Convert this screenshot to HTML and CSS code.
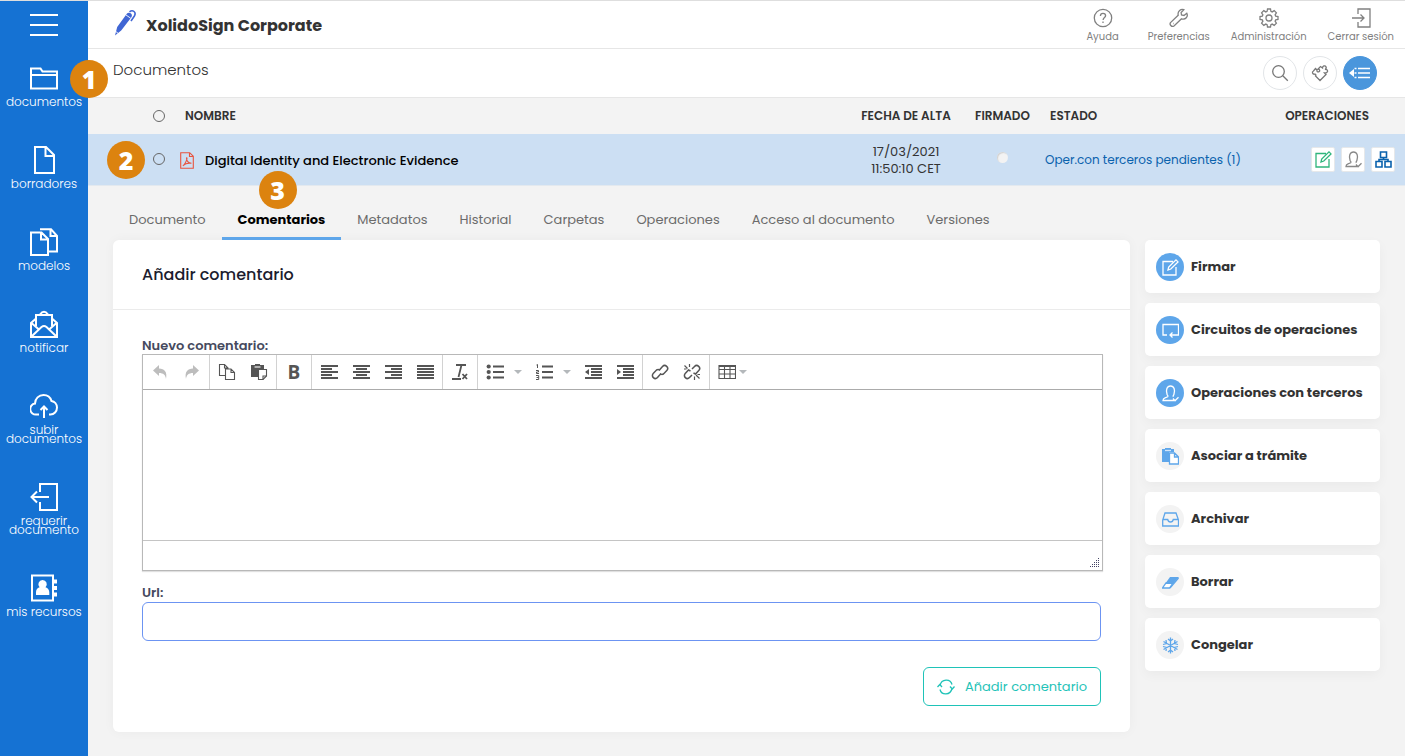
FILE: index.html
```html
<!DOCTYPE html>
<html lang="es">
<head>
<meta charset="utf-8">
<title>XolidoSign Corporate</title>
<link rel="stylesheet" href="styles.css">
</head>
<body>
<nav class="sidebar" aria-label="Principal">
  <button class="menu-toggle" aria-label="Menú"><span></span><span></span><span></span></button>
  <a class="side-item" href="#">
    <svg viewBox="0 0 28 28"><path d="M1 24.500V4.500h9.500l2 3H27v17z M1.500 11H27"/></svg>
    documentos
    <span class="badge badge-side">1</span>
  </a>
  <a class="side-item" href="#"><svg viewBox="0 0 28 28"><path d="M5 1h11l8 8v18H5z M15.500 1.500v8.500H24"/></svg>borradores</a>
  <a class="side-item" href="#"><svg viewBox="0 0 28 28"><path d="M1 4.500h10.500L18 11v16H1z M11 5v6.500h7 M10 1.200h11L27 8v15.500h-8 M20.500 1.500V8H27"/></svg>modelos</a>
  <a class="side-item" href="#"><svg viewBox="0 0 28 28"><path d="M6 16V5h16v11 M10 4.500Q14-1 18 4.500 M5.500 9 1 13v14h26V13l-4.500-4 M1.500 13l8 7 M26.500 13l-8 7 M1.500 26.500 11.500 17q2.500-2 5 0l10 9.500"/></svg>notificar</a>
  <a class="side-item" href="#"><svg viewBox="0 0 28 28"><path d="M9 22.500H6.500A5.500 5.500 0 0 1 5 11.600C5 6.500 9 3 13.500 3c4 0 7 2.500 8 6 3 .5 5.500 3.200 5.500 6.600 0 4-3 6.900-6.500 6.900H19 M14 26V14.500 M10.500 18l3.500-3.500 3.500 3.500"/></svg>subir<br>documentos</a>
  <a class="side-item" href="#"><svg viewBox="0 0 28 28"><path d="M10 9V1h17v26H10v-8 M19 14H1.500 M7 8.500 1.500 14 7 19.500"/></svg>requerir<br>documento</a>
  <a class="side-item" href="#"><svg viewBox="0 0 28 28"><path d="M2 1.500h21v25H2z"/><path class="solid" d="M24 5.500h3v4h-3z M24 12h3v4h-3z M24 18.500h3v4h-3z M12.500 6a4.200 4.200 0 0 1 3 7.200c2.500.8 3.800 2.500 3.800 5.300v2.500H6v-2.500c0-2.800 1-4.500 3.600-5.300A4.200 4.200 0 0 1 12.500 6z"/></svg>mis recursos</a>
</nav>

<div class="app">
  <header class="topbar">
    <svg class="logo" viewBox="0 0 24 28"><path fill="#4066d4" d="M1 26.500 3.200 18 13 4.600q1.500-1.600 3.200-.5 2.700 1.500 1.200 4.200L7.200 21.500z"/><path fill="none" stroke="#4066d4" stroke-width="1.600" d="M15.500 2.800q2.500-2 4.500-.3 2 1.800.4 4.500l-3.400 5"/><path stroke="#fff" stroke-width=".9" d="m12 6 4.700 3.200M1.800 22.500l2.600 2"/></svg>
    <h1 class="brand">XolidoSign Corporate</h1>
    <nav class="top-links" aria-label="Usuario">
      <a class="top-link help" href="#"><svg viewBox="0 0 20 20"><circle cx="10" cy="10" r="8.700"/><path d="M7.400 8q0-2.700 2.600-2.700T12.600 7.700c0 1.800-2.500 2-2.500 4.300M10 13.500v1.500"/></svg>Ayuda</a>
      <a class="top-link" href="#"><svg viewBox="0 0 20 20"><path d="M17.800 5.200 15 7.500 12.500 7l-.4-2.500 2.700-2.800C12 .6 8.300 3 9.200 7.200L1.500 14.600q-1 1.500.3 2.900 1.400 1.600 3.200.5l7.500-7.200c4 1.200 7-2 5.300-5.600z"/><path d="M4 15.500h.5"/></svg>Preferencias</a>
      <a class="top-link" href="#"><svg viewBox="0 0 20 20"><circle cx="10" cy="10" r="3"/><path d="m8.500 1-.4 2.300-1.300.6-2-1.300-2.200 2.200 1.300 2-.6 1.300L1 8.500v3l2.300.4.6 1.300-1.300 2 2.200 2.200 2-1.300 1.300.6.400 2.300h3l.4-2.300 1.300-.6 2 1.300 2.200-2.200-1.300-2 .6-1.300 2.300-.4v-3l-2.300-.4-.6-1.300 1.300-2-2.200-2.200-2 1.300-1.300-.6-.4-2.300z"/></svg>Administración</a>
      <a class="top-link" href="#"><svg viewBox="0 0 20 20"><path d="M7 6V1h12v18H7v-5M1 10h12M9.500 6.500 13 10l-3.500 3.500"/></svg>Cerrar sesión</a>
    </nav>
  </header>

  <div class="titlebar">
    <h2 class="page-title">Documentos</h2>
    <div class="round-actions">
      <button class="round" aria-label="Buscar"><svg viewBox="0 0 18 18"><circle cx="7.500" cy="7.500" r="5.800"/><path d="m11.800 11.800 5 5"/></svg></button>
      <button class="round" aria-label="Módulos"><svg viewBox="0 0 18 18"><path d="M9 16.500 4.500 12c.8-1 .3-2-.8-1.800C1.500 10.500.5 8 2.500 7L4.500 4.500 6 6C5.500 7.500 6.500 8.300 7.700 7.800 9.500 7 8.800 5 7 5L9.500 2.500 11.500 4C11.500 2 14 1 15 2.800 15.500 4 15 5 14 5.500 16 5 17.500 7 16 8.300 15.500 9 14.500 9 13.500 9L15 10.500z"/></svg></button>
      <button class="round round-on" aria-label="Lista"><svg viewBox="0 0 22 18"><path d="M9 4.500h12M9 9h12M9 13.500h12M5.500 4.500h2M5.500 9h2M5.500 13.500h2"/><path class="solid" d="M0 9l5-4v8z"/></svg></button>
    </div>
  </div>

  <table class="docs">
    <colgroup><col class="c-pick"><col><col class="c-date"><col class="c-signed"><col class="c-state"><col class="c-ops"></colgroup>
    <thead>
      <tr>
        <th class="pick"><input type="radio" name="all" aria-label="Seleccionar todo"></th>
        <th class="name">NOMBRE</th>
        <th>FECHA DE ALTA</th>
        <th>FIRMADO</th>
        <th class="state-head">ESTADO</th>
        <th class="ops-head">OPERACIONES</th>
      </tr>
    </thead>
    <tbody>
      <tr>
        <td class="pick"><span class="badge badge-row">2</span><input type="radio" name="doc" aria-label="Seleccionar documento"></td>
        <td><a class="doc-link" href="#"><svg viewBox="0 0 14 17"><path d="M.700.700h9l3.600 3.600v12H.700zM9.500.700v3.800h3.800M6.300 5.500c1.500 0 .5 4-3.300 8.500M6.500 6c0 3 2 5 5 5.300-3.500-.6-6.300.3-8.500 2.400"/></svg>Digital Identity and Electronic Evidence</a></td>
        <td class="date">17/03/2021<br>11:50:10 CET</td>
        <td class="signed"><span class="dot"></span></td>
        <td class="state"><a href="#">Oper.con terceros pendientes (1)</a></td>
        <td class="ops"><div class="op-list">
          <button class="op op-sign" aria-label="Firmar"><svg viewBox="0 0 17 17"><path d="M11 2.500H1v13.500h13V8M6 11l.7-3L14 .9l2 2L8.800 10z"/></svg></button>
          <button class="op op-user" aria-label="Terceros"><svg viewBox="0 0 17 17"><path d="M12 15.500H1q0-2 2-2.700l2.700-1c.8-.8 0-1.500-.6-2.300C3.500 5 5 1 8.500 1s5 4 3.400 8.500c-.6.800-1.100 1.500-.6 2.300M11 13.500l2 2.200 3.500-3.500"/></svg></button>
          <button class="op op-flow" aria-label="Circuito"><svg viewBox="0 0 17 17"><path d="M5.500 1h6v5.500h-6zM1 10.500h6v5.500H1zM10 10.500h6v5.500h-6zM8.500 6.500v2M4 10.500v-2h9v2"/></svg></button>
        </div></td>
      </tr>
    </tbody>
  </table>

  <nav class="tabs" aria-label="Detalle">
    <a href="#">Documento</a>
    <a class="active" href="#">Comentarios<span class="badge badge-tab">3</span></a>
    <a href="#">Metadatos</a>
    <a href="#">Historial</a>
    <a href="#">Carpetas</a>
    <a href="#">Operaciones</a>
    <a href="#">Acceso al documento</a>
    <a href="#">Versiones</a>
  </nav>

  <main class="content">
    <section class="card">
      <h3 class="card-title">Añadir comentario</h3>
      <form class="card-body">
        <label for="comment">Nuevo comentario:</label>
        <div class="editor">
          <div class="toolbar">
            <div class="group">
              <button type="button" class="off" aria-label="Deshacer"><svg viewBox="0 0 18 16"><path class="solid" d="M2 6.500 8 1v3.500c5.500 0 8.500 3.500 7 10.500-.5-4-2.500-6-7-6V12z"/></svg></button>
              <button type="button" class="off" aria-label="Rehacer"><svg viewBox="0 0 18 16"><path class="solid" d="m16 6.500-6-5.500v3.500C4.500 4.500 1.500 8 3 15c.5-4 2.500-6 7-6V12z"/></svg></button>
            </div>
            <div class="group">
              <button type="button" aria-label="Copiar"><svg class="thin" viewBox="0 0 18 16"><path d="M7.500 11.500H1.500V.500H6.500l3.500 3.500V5M6.500.500V4H10M7.500 5h5.500l3.500 3.500v7h-9zM13 5v3.500h3.500"/></svg></button>
              <button type="button" aria-label="Pegar"><svg class="thin" viewBox="0 0 18 16"><path class="solid" d="M1 1h4V0h5v1h4v4H8v8H1z"/><path stroke="#fff" d="M4.500 3h6"/><path fill="#fff" d="M8.500 5.500h8V12L13 15.500H8.500z"/><path d="M13 15.500V12h3.500"/></svg></button>
            </div>
            <div class="group"><button type="button" class="bold" aria-label="Negrita">B</button></div>
            <div class="group">
              <button type="button" aria-label="Izquierda"><svg viewBox="0 0 18 16"><path d="M1 2h17M1 5h11M1 8h17M1 11h11M1 14h17"/></svg></button>
              <button type="button" aria-label="Centrar"><svg viewBox="0 0 18 16"><path d="M1 2h17M4 5h11M1 8h17M4 11h11M1 14h17"/></svg></button>
              <button type="button" aria-label="Derecha"><svg viewBox="0 0 18 16"><path d="M1 2h17M7 5h11M1 8h17M7 11h11M1 14h17"/></svg></button>
              <button type="button" aria-label="Justificar"><svg viewBox="0 0 18 16"><path d="M1 2h17M1 5h17M1 8h17M1 11h17M1 14h17"/></svg></button>
            </div>
            <div class="group"><button type="button" aria-label="Limpiar formato"><svg viewBox="0 0 18 16"><path d="M5 1h10M10.500 1l-3 12M1 15h9M11.500 10l4.500 5M16 10l-4.500 5"/></svg></button></div>
            <div class="group">
              <button type="button" aria-label="Viñetas"><svg viewBox="0 0 18 16"><path d="M7 2.500h11M7 8h11M7 13.500h11"/><circle class="solid" cx="2.700" cy="2.500" r="2.100"/><circle class="solid" cx="2.700" cy="8" r="2.100"/><circle class="solid" cx="2.700" cy="13.500" r="2.100"/></svg></button>
              <button type="button" class="drop" aria-label="Tipos de viñeta"><span class="caret"></span></button>
              <button type="button" aria-label="Numeración"><svg viewBox="0 0 18 16"><path d="M7 2.500h11M7 8h11M7 13.500h11"/><path stroke-width="1" d="m1.500 1 1-.5V4M1 6.500h2.500V8H1.500v1.500h2.500M1 11.500h2.700V15.500H1M1.500 13.500h2"/></svg></button>
              <button type="button" class="drop" aria-label="Tipos de numeración"><span class="caret"></span></button>
              <button type="button" aria-label="Reducir sangría"><svg viewBox="0 0 18 16"><path d="M1 2h17M7 5h11M7 8h11M7 11h11M1 14h17"/><path class="solid" d="m1 8 4-3v6z"/></svg></button>
              <button type="button" aria-label="Aumentar sangría"><svg viewBox="0 0 18 16"><path d="M1 2h17M7 5h11M7 8h11M7 11h11M1 14h17"/><path class="solid" d="M5 8 1 5v6z"/></svg></button>
            </div>
            <div class="group">
              <button type="button" aria-label="Enlace"><svg class="link" viewBox="0 0 18 16"><path d="m8 6.500 3.500-4a2.900 2.900 0 0 1 4.300 4L12.500 10Q10.500 11 9 9.500M10 9.500l-3.500 4a2.900 2.900 0 0 1-4.300-4L5.500 6Q7.500 5 9 6.500"/></svg></button>
              <button type="button" aria-label="Quitar enlace"><svg class="link" viewBox="0 0 18 16"><path d="m9 5 2.500-2.500a2.900 2.900 0 0 1 4.300 4L12.500 10l-2-1M9 11l-2.500 2.500a2.900 2.900 0 0 1-4.300-4L5.500 6l2 1"/><path stroke-width="1.200" d="m1.500 1.500 3 3M6.500 0v3M1 5h2.500M13 11l3.500 3.500M11.500 12.500V16M14.500 10.500H17"/></svg></button>
            </div>
            <div class="group last"><button type="button" class="table-drop" aria-label="Tabla"><svg class="thin" viewBox="0 0 18 16"><path d="M1 1.500h16.500v13H1zM1 5.500h16.500M1 10h16.500M6.500 1.500v13M12 1.500v13"/><path stroke-width="2" d="M1 2h16.500"/></svg><span class="caret"></span></button></div>
          </div>
          <textarea id="comment" class="editor-area"></textarea>
          <div class="statusbar"><svg viewBox="0 0 10 9"><path stroke-dasharray="1 1" d="M9 .500h1M7 2.500h3M5 4.500h5M3 6.500h7M1 8.500h9"/></svg></div>
        </div>
        <label for="url">Url:</label>
        <input id="url" class="url" type="text">
        <button type="button" class="submit"><svg viewBox="0 0 18 16"><path d="M3 6.500C4.500-.5 13.500-.5 15 5.500M15 9.500c-1.500 7-10.500 7-12 1M.500 8 2.800 5.500 5 8M17.500 7.500 15.300 10 13 7.500"/></svg>Añadir comentario</button>
      </form>
    </section>

    <aside class="actions">
      <button class="action"><span class="disc disc-on"><svg viewBox="0 0 17 17"><path d="M11 2.500H1v13.500h13V8M6 11l.7-3L14 .9l2 2L8.800 10z"/></svg></span>Firmar</button>
      <button class="action"><span class="disc disc-on"><svg viewBox="0 0 17 17"><path d="M5 13H1V2.500h15.500V13H8M10.500 10.500 8 13l2.500 2.500"/></svg></span>Circuitos de operaciones</button>
      <button class="action"><span class="disc disc-on"><svg viewBox="0 0 17 17"><path d="M12 15.500H1q0-2 2-2.700l2.700-1c.8-.8 0-1.500-.6-2.300C3.500 5 5 1 8.500 1s5 4 3.400 8.500c-.6.800-1.100 1.500-.6 2.300M11 13.500l2 2.200 3.500-3.500"/></svg></span>Operaciones con terceros</button>
      <button class="action"><span class="disc"><svg viewBox="0 0 17 17"><path class="solid" d="M0 1h3V0h6v1h3v3H7v10H0z"/><path stroke="#d4e6f9" d="M3 2.500h6"/><path fill="#fff" d="M7.500 5h5l4 4v7h-9zM12.500 5v4h4"/></svg></span>Asociar a trámite</button>
      <button class="action"><span class="disc"><svg viewBox="0 0 17 17"><path d="M3 2h11l2.500 7v6H.700V9zM.700 8.500h5q.5 2.500 2.800 2.500t2.800-2.500h5.200"/></svg></span>Archivar</button>
      <button class="action"><span class="disc"><svg viewBox="0 0 17 17"><path fill="#fff" d="M.500 14 4 9h7l-3.500 5z"/><path class="solid" d="M8 3h9L11 10H3z"/><path d="M8 14 16.500 4"/></svg></span>Borrar</button>
      <button class="action"><span class="disc"><svg viewBox="0 0 17 17"><path d="M8.500.500v16M1.500 4.500l14 8M15.500 4.500l-14 8M6 2l2.500 2L11 2M6 15l2.500-2 2.500 2M1 7.500l3.500-1L4 3M16 9.500l-3.500 1L13 14M16 7.500l-3.500-1L13 3M1 9.500l3.500 1L4 14"/></svg></span>Congelar</button>
    </aside>
  </main>
</div>
</body>
</html>
```

FILE: styles.css
```css
* { box-sizing: border-box; }
body {
  margin: 0;
  min-height: 100vh;
  display: flex;
  border-top: 1px solid #dedede;
  background: #f3f3f3;
  color: #333;
  font-family: Poppins, Inter, sans-serif;
  font-size: 13px;
}
h1, h2, h3 { margin: 0; }
a { color: inherit; text-decoration: none; }
button { font: inherit; color: inherit; border: 0; background: none; padding: 0; margin: 0; }
svg { display: block; flex: none; fill: none; stroke: currentColor; stroke-width: 1.3; }
.solid { fill: currentColor; stroke: none; }

.sidebar {
  width: 88px;
  flex: none;
  display: flex;
  flex-direction: column;
  align-items: center;
  gap: 40px;
  padding-top: 13px;
  background: #1572d3;
  color: #fff;
}
.menu-toggle { width: 28px; height: 22px; margin-bottom: -12px; display: flex; flex-direction: column; justify-content: space-between; }
.menu-toggle span { height: 2px; width: 100%; background: #fff; }
.side-item {
  position: relative;
  width: 100%;
  display: block;
  text-align: center;
  font-size: 12px;
  font-weight: 300;
  line-height: 9px;
}
.side-item svg { width: 28px; height: 28px; margin: 0 auto 5px; stroke-width: 2; }

.badge {
  position: absolute;
  z-index: 2;
  width: 38px;
  height: 38px;
  border-radius: 50%;
  background: #dc830f;
  color: #fff;
  font-family: "Open Sans", sans-serif;
  font-size: 25px;
  font-weight: 800;
  line-height: 38px;
  text-align: center;
}
.badge-side { right: -20px; top: -4px; }
.badge-row { left: 19px; top: 7px; }
.badge-tab { left: 37px; top: -28px; }

.app { flex: 1; min-width: 0; display: flex; flex-direction: column; }
.topbar {
  display: flex;
  align-items: center;
  height: 48px;
  padding: 0 11px 0 26px;
  background: #fff;
  border-bottom: 1px solid #e6e6e6;
}
.logo { width: 24px; height: 28px; margin-right: 8px; margin-bottom: 4px; stroke: none; }
.brand { font-size: 16px; font-weight: 700; padding-top: 1px; }
.top-links { margin-left: auto; display: flex; gap: 21px; }
.top-link { display: flex; flex-direction: column; align-items: center; gap: 2px; padding-top: 3px; font-size: 10px; line-height: 14px; color: #808080; }
.top-link svg { width: 20px; height: 20px; }
.help { margin-right: 8px; }

.titlebar {
  display: flex;
  align-items: center;
  justify-content: space-between;
  height: 49px;
  padding: 0 28px 0 25px;
  background: #fff;
  border-bottom: 1px solid #e6e6e6;
}
.page-title { font-size: 15px; font-weight: 300; padding-bottom: 7px; }
.round-actions { display: flex; gap: 6px; }
.round {
  width: 34px;
  height: 34px;
  display: grid;
  place-items: center;
  border: 1px solid #e2e5e8;
  border-radius: 50%;
  color: #777;
}
.round svg { width: 18px; height: 18px; }
.round-on { background: #4a96dc; border-color: #4a96dc; color: #fff; }
.round-on svg { width: 22px; }

.docs { width: 100%; table-layout: fixed; border-collapse: collapse; }
.c-pick { width: 92px; }
.c-date { width: 120px; }
.c-signed { width: 73px; }
.c-state { width: 230px; }
.c-ops { width: 136px; }
th, td { padding: 0; text-align: center; }
th { height: 36px; font-size: 12px; font-weight: 600; }
th.name { text-align: left; padding-left: 5px; }
th.state-head { text-align: left; padding-left: 11px; }
th.ops-head { text-align: right; padding-right: 36px; }
tbody td { height: 51px; background: #ccdff3; border-bottom: 1px solid #e3e9ef; }
td.pick { position: relative; }
.pick { text-align: right; padding-right: 15px; }
.pick input {
  appearance: none;
  display: block;
  width: 12px;
  height: 12px;
  margin: 0 0 0 auto;
  border: 1px solid #666;
  border-radius: 50%;
}
.doc-link { display: flex; align-items: center; gap: 11px; padding-top: 3px; color: #000; font-weight: 500; }
.doc-link svg { width: 14px; height: 17px; color: #e8543f; stroke-width: 1.1; }
.date { line-height: 17px; padding-top: 1px; }
.dot {
  display: block;
  width: 11px;
  height: 11px;
  margin: 0 auto 4px;
  border-radius: 50%;
  background: #f3f3f3;
  box-shadow: inset 1px 1px 1px #d2d2d2;
}
td.state { text-align: left; padding: 2px 0 0 6px; color: #0a62ad; font-size: 12px; }
.op-list { display: flex; justify-content: flex-end; gap: 6px; padding-right: 10px; }
.op { width: 24px; height: 25px; display: grid; place-items: center; background: #fff; border: 1px solid #e6e8ea; border-radius: 2px; }
.op svg { width: 17px; height: 17px; }
.op-sign { color: #2fb57c; }
.op-user { color: #888; }
.op-flow { color: #0a62ad; }
.op-flow svg { stroke-width: 1.6; }

.tabs { display: flex; padding: 13px 25px 0; color: #6b6b6b; font-size: 13px; }
.tabs a { position: relative; padding: 10px 16px; height: 41px; line-height: 22px; }
.tabs .active { color: #000; font-weight: 700; border-bottom: 3px solid #5ea6ea; }

.content { display: flex; align-items: flex-start; gap: 15px; padding: 0 25px 24px; }
.card { flex: 1; min-width: 0; background: #fff; border-radius: 6px; box-shadow: 0 0 12px #0000000a; }
.card-title { padding: 0 29px; line-height: 69px; border-bottom: 1px solid #ebebeb; font-size: 16px; font-weight: 500; color: #1b1c2e; }
.card-body { display: flex; flex-direction: column; padding: 27px 29px 26px; }
.card-body label { font-size: 13px; font-weight: 600; line-height: 17px; color: #464a5e; }
.editor { margin: 0 -2px 13px 0; border: 1px solid #b8b8b8; box-shadow: 0 1px 1px #0000001f; }
.toolbar { display: flex; height: 35px; border-bottom: 1px solid #ababab; color: #555; }
.group { display: flex; padding: 0 1px; border-right: 1px solid #d2d2d2; }
.group.last { border: 0; }
.group button { width: 32px; display: flex; align-items: center; justify-content: center; }
.group svg { width: 18px; height: 16px; stroke-width: 1.8; }
.group .thin { stroke-width: 1.1; }
.group .link { stroke-width: 1.5; }
.group .off { color: #bdbdbd; }
.group .bold { font-family: "Open Sans", sans-serif; font-size: 19px; font-weight: 700; }
.group .drop { width: 17px; padding-right: 3px; }
.group .table-drop { width: 43px; gap: 3px; }
.caret { border: 4px solid transparent; border-top-color: #b4b8bb; border-bottom: 0; }
.editor-area { display: block; width: 100%; height: 150px; border: 0; resize: none; outline: 0; font: inherit; }
.statusbar { display: flex; justify-content: flex-end; align-items: flex-end; height: 30px; padding: 3px; border-top: 1px solid #c4c4c4; color: #446; }
.statusbar svg { width: 10px; height: 9px; stroke-width: 1; }
.url { height: 39px; margin: 1px 0 26px; border: 1px solid #6c94f2; border-radius: 6px; padding: 0 12px; font: inherit; }
.submit {
  align-self: flex-end;
  display: flex;
  align-items: center;
  gap: 10px;
  height: 39px;
  padding: 1px 13px 0;
  border: 1px solid #1fc3b8;
  border-radius: 6px;
  color: #1fc3b8;
  font-size: 13px;
}
.submit svg { width: 18px; height: 16px; }

.actions { width: 235px; flex: none; display: flex; flex-direction: column; gap: 10px; }
.action {
  display: flex;
  align-items: center;
  gap: 7px;
  height: 53px;
  padding: 2px 11px 0;
  background: #fff;
  border-radius: 5px;
  box-shadow: 0 4px 12px #0000000a;
  font-size: 13px;
  font-weight: 700;
}
.disc { width: 28px; height: 28px; display: grid; place-items: center; border-radius: 50%; background: #f3f3f3; color: #5ea6ea; }
.disc svg { width: 17px; height: 17px; }
.disc-on { background: #5ea6ea; color: #fff; }
```
